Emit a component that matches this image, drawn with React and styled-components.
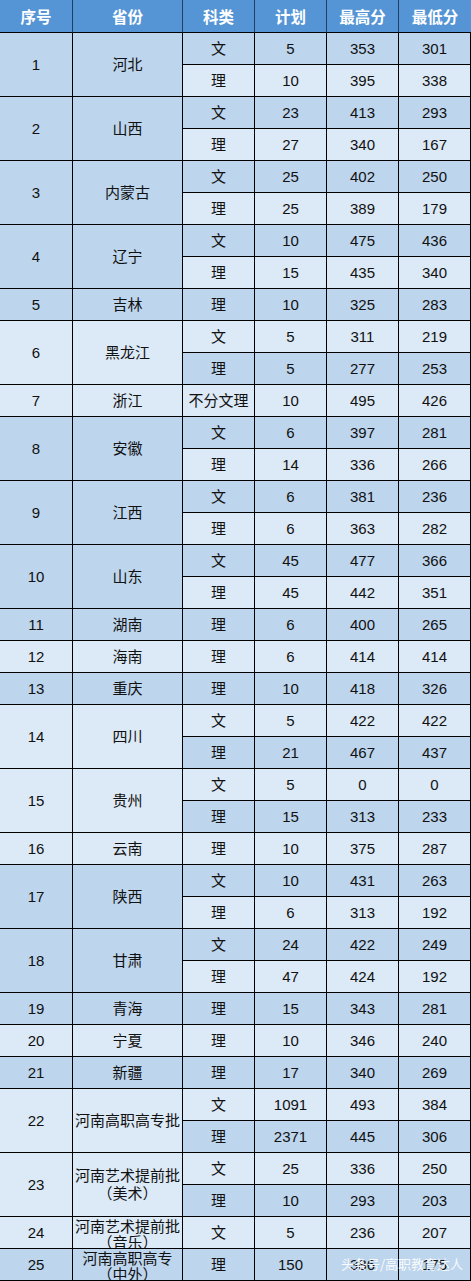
import React from "react";
import styled, { createGlobalStyle } from "styled-components";

const GlobalStyle = createGlobalStyle`
  body {
    margin: 0;
    background: #ffffff;
  }
`;

const data = [
  { id: 1, province: "河北", rows: [["文", 5, 353, 301], ["理", 10, 395, 338]] },
  { id: 2, province: "山西", rows: [["文", 23, 413, 293], ["理", 27, 340, 167]] },
  { id: 3, province: "内蒙古", rows: [["文", 25, 402, 250], ["理", 25, 389, 179]] },
  { id: 4, province: "辽宁", rows: [["文", 10, 475, 436], ["理", 15, 435, 340]] },
  { id: 5, province: "吉林", rows: [["理", 10, 325, 283]] },
  { id: 6, province: "黑龙江", rows: [["文", 5, 311, 219], ["理", 5, 277, 253]] },
  { id: 7, province: "浙江", rows: [["不分文理", 10, 495, 426]] },
  { id: 8, province: "安徽", rows: [["文", 6, 397, 281], ["理", 14, 336, 266]] },
  { id: 9, province: "江西", rows: [["文", 6, 381, 236], ["理", 6, 363, 282]] },
  { id: 10, province: "山东", rows: [["文", 45, 477, 366], ["理", 45, 442, 351]] },
  { id: 11, province: "湖南", rows: [["理", 6, 400, 265]] },
  { id: 12, province: "海南", rows: [["理", 6, 414, 414]] },
  { id: 13, province: "重庆", rows: [["理", 10, 418, 326]] },
  { id: 14, province: "四川", rows: [["文", 5, 422, 422], ["理", 21, 467, 437]] },
  { id: 15, province: "贵州", rows: [["文", 5, 0, 0], ["理", 15, 313, 233]] },
  { id: 16, province: "云南", rows: [["理", 10, 375, 287]] },
  { id: 17, province: "陕西", rows: [["文", 10, 431, 263], ["理", 6, 313, 192]] },
  { id: 18, province: "甘肃", rows: [["文", 24, 422, 249], ["理", 47, 424, 192]] },
  { id: 19, province: "青海", rows: [["理", 15, 343, 281]] },
  { id: 20, province: "宁夏", rows: [["理", 10, 346, 240]] },
  { id: 21, province: "新疆", rows: [["理", 17, 340, 269]] },
  { id: 22, province: "河南高职高专批", rows: [["文", 1091, 493, 384], ["理", 2371, 445, 306]] },
  { id: 23, province: ["河南艺术提前批", "（美术）"], rows: [["文", 25, 336, 250], ["理", 10, 293, 203]] },
  { id: 24, province: ["河南艺术提前批", "（音乐）"], clip: true, rows: [["文", 5, 236, 207]] },
  { id: 25, province: ["河南高职高专", "（中外）"], clip: true, rows: [["理", 150, 386, 175]] },
];

const headers = ["序号", "省份", "科类", "计划", "最高分", "最低分"];

const Wrap = styled.div`
  position: relative;
  width: 471px;
  overflow: hidden;
`;

const Grid = styled.div`
  display: grid;
  grid-template-columns: 73px 110px 72px 72px 72px 72px;
  grid-template-rows: 33px;
  grid-auto-rows: 32px;
  font-family: "Liberation Sans", "Noto Sans CJK SC", sans-serif;
  font-size: 15px;
`;

const HeadCell = styled.div`
  display: flex;
  align-items: center;
  justify-content: center;
  box-sizing: border-box;
  background: #5595d5;
  color: #ffffff;
  font-weight: 700;
  font-size: 15.5px;
  border-bottom: 1px solid #000;
  border-right: ${(p) => (p.$last ? "none" : "1px solid #1d3f66")};
`;

const Cell = styled.div`
  display: flex;
  flex-direction: column;
  align-items: center;
  justify-content: ${(p) => (p.$clip ? "flex-start" : "center")};
  padding-top: ${(p) => (p.$clip ? "2px" : "0")};
  box-sizing: border-box;
  overflow: hidden;
  grid-row: span ${(p) => p.$span || 1};
  background: ${(p) => (p.$dark ? "#bdd5ed" : "#dce9f6")};
  color: #111;
  line-height: ${(p) => (p.$clip ? "16px" : "18px")};
  text-align: center;
  white-space: nowrap;
  border-bottom: 1px solid #000;
  border-right: 1px solid #000;
`;

const Watermark = styled.div`
  position: absolute;
  right: 8px;
  bottom: 10px;
  font-family: "Noto Sans CJK SC", sans-serif;
  font-size: 13px;
  line-height: 14px;
  color: rgba(255, 255, 255, 0.92);
  white-space: nowrap;
  pointer-events: none;
`;

const Province = ({ name }) =>
  Array.isArray(name) ? name.map((line) => <span key={line}>{line}</span>) : name;

const App = () => {
  let rowIndex = 0;
  const cells = [];
  data.forEach((group) => {
    const span = group.rows.length;
    const firstDark = rowIndex % 2 === 0;
    group.rows.forEach((row, i) => {
      const dark = (rowIndex + i) % 2 === 0;
      if (i === 0) {
        cells.push(
          <Cell key={`${group.id}-id`} $span={span} $dark={firstDark}>
            {group.id}
          </Cell>
        );
        cells.push(
          <Cell key={`${group.id}-p`} $span={span} $dark={firstDark} $clip={group.clip}>
            <Province name={group.province} />
          </Cell>
        );
      }
      row.forEach((value, j) => {
        cells.push(
          <Cell key={`${group.id}-${i}-${j}`} $dark={dark}>
            {value}
          </Cell>
        );
      });
    });
    rowIndex += span;
  });

  return (
    <Wrap>
      <GlobalStyle />
      <Grid>
        {headers.map((h, i) => (
          <HeadCell key={h} $last={i === headers.length - 1}>
            {h}
          </HeadCell>
        ))}
        {cells}
      </Grid>
      <Watermark>头条号/高职教育达人</Watermark>
    </Wrap>
  );
};

export default App;
